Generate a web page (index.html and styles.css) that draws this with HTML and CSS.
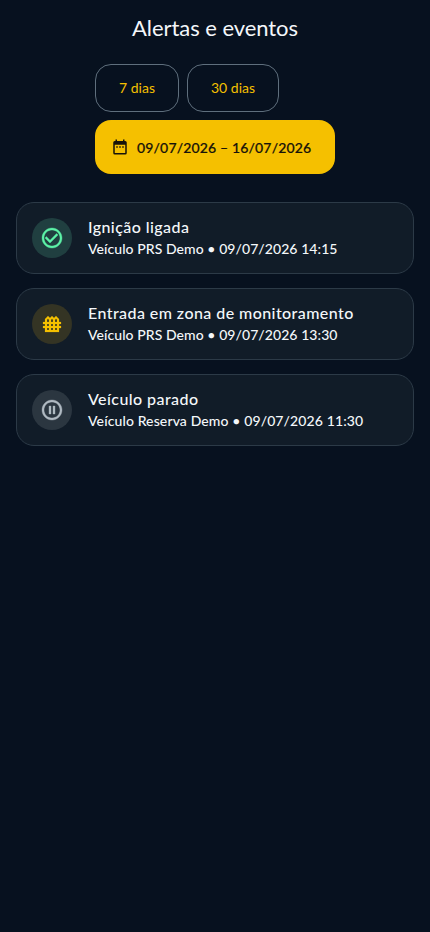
FILE: index.html
```html
<!DOCTYPE html>
<html lang="pt-BR">
<head>
<meta charset="utf-8">
<title>Alertas e eventos</title>
<link rel="stylesheet" href="styles.css">
</head>
<body>
<header class="bar"><h1>Alertas e eventos</h1></header>
<main>
<div class="filters">
<button class="btn">7 dias</button>
<button class="btn wide">30 dias</button>
<button class="btn range"><svg viewBox="0 0 24 24" width="18" height="18"><path fill-rule="evenodd" d="M5 4h1V2h2v2h8V2h2v2h1a2 2 0 0 1 2 2v14a2 2 0 0 1-2 2H5a2 2 0 0 1-2-2V6a2 2 0 0 1 2-2zM5 9v11h14V9zM7 11h2v2H7zM11 11h2v2h-2zM15 11h2v2h-2z"/></svg><span>09/07/2026 – 16/07/2026</span></button>
</div>
<ul class="events">
<li class="card"><span class="icon green"><svg viewBox="0 0 24 24" width="24" height="24"><path d="M16.590 7.580 10 14.170l-3.590-3.580L5 12l5 5 8-8zM12 2C6.480 2 2 6.480 2 12s4.480 10 10 10 10-4.480 10-10S17.520 2 12 2zm0 18c-4.420 0-8-3.580-8-8s3.580-8 8-8 8 3.580 8 8-3.580 8-8 8z"/></svg></span><div><h2>Ignição ligada</h2><p>Veículo PRS Demo • 09/07/2026 14:15</p></div></li>
<li class="card"><span class="icon yellow"><svg viewBox="0 0 24 24" width="24" height="24"><path d="M21 12v-2h-2V7l-3-3-2 2-2-2-2 2-2-2-3 3v3H3v2h2v2H3v2h2v4h14v-4h2v-2h-2v-2h2zm-5-5.170 1 1V10h-2V7.830l.410-.410.590-.590zm-4 0 .590.590.410.410V10h-2V7.830l.410-.410.590-.590zM11 14v-2h2v2h-2zm2 2v2h-2v-2h2zM7 7.830l1-1 .590.590.410.410V10H7V7.830zM7 12h2v2H7v-2zm0 4h2v2H7v-2zm10 2h-2v-2h2v2zm0-4h-2v-2h2v2z"/></svg></span><div><h2>Entrada em zona de monitoramento</h2><p>Veículo PRS Demo • 09/07/2026 13:30</p></div></li>
<li class="card"><span class="icon grey"><svg viewBox="0 0 24 24" width="24" height="24"><path d="M9 16h2V8H9v8zm3-14C6.480 2 2 6.480 2 12s4.480 10 10 10 10-4.480 10-10S17.520 2 12 2zm0 18c-4.410 0-8-3.590-8-8s3.590-8 8-8 8 3.590 8 8-3.590 8-8 8zm1-4h2V8h-2v8z"/></svg></span><div><h2>Veículo parado</h2><p class="long">Veículo Reserva Demo • 09/07/2026 11:30</p></div></li>
</ul>
</main>
</body>
</html>
```
FILE: styles.css
```css
*{box-sizing:border-box}
body{margin:0;min-height:100vh;background:#07111f;color:#f4f7fa;font-family:Lato,sans-serif}
.bar{height:56px;display:flex;align-items:center;justify-content:center}
h1{margin:0;font-size:22px;font-weight:400;line-height:28px;letter-spacing:-.05px}
main{padding:8px 16px}
.filters{display:flex;flex-wrap:wrap;gap:8px;width:240px;margin:0 auto 28px}
.btn{height:48px;width:84px;padding:0;border:1px solid #5f6f7d;border-radius:16px;background:none;color:#f5c000;font:400 14px/20px Lato,sans-serif}
.wide{width:92px}
.range{width:240px;height:54px;border:0;background:#f5c000;color:#17130a;display:flex;align-items:center;padding:0 16px;gap:8px;font-weight:500;letter-spacing:.16px}
.range span{padding-top:2px;white-space:nowrap;-webkit-text-stroke:.2px currentColor}
svg{display:block;fill:currentColor;flex:none}
.icon svg{stroke:currentColor;stroke-width:.35px}
.events{list-style:none;margin:0;padding:0;display:grid;gap:14px}
.card{height:72px;display:flex;align-items:center;gap:16px;padding:0 15px 2px;border:1px solid #2c3a47;border-radius:18px;background:#111c28}
.icon{width:40px;height:40px;margin-top:2px;border-radius:50%;display:flex;align-items:center;justify-content:center}
.green{background:#203f40;color:#5cf2a7}
.yellow{background:#343424;color:#f5c000}
.yellow svg{stroke-width:.2px}
.grey{background:#2b3640;color:#b0bac2}
h2{margin:0;font-size:16px;font-weight:500;line-height:24px;letter-spacing:.43px}
p{margin:0;font-size:14px;font-weight:500;line-height:20px;letter-spacing:.07px}
.long{letter-spacing:.12px}
```
